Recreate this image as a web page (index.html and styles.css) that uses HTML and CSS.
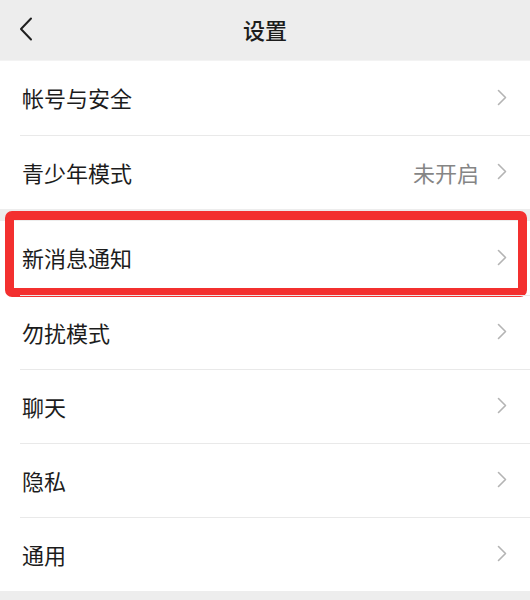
FILE: index.html
```html
<!DOCTYPE html>
<html lang="zh-CN">
<head>
  <meta charset="UTF-8">
  <title>设置</title>
  <link rel="stylesheet" href="styles.css">
</head>
<body>
  <div class="topbar">
    <div class="back">
      <svg width="14" height="24" viewBox="0 0 14 24"><path d="M12 1.5L2 12l10 10.5" fill="none" stroke="#1f1f1f" stroke-width="2" stroke-linecap="round" stroke-linejoin="round"/></svg>
    </div>
    <div class="title">设置</div>
    <div></div>
  </div>

  <div class="group">
    <div class="row">
      <div class="row-body">
        <span class="label">帐号与安全</span>
        <span class="arrow"><svg width="10" height="17" viewBox="0 0 10 17"><path d="M1.5 1.5l7 7-7 7" fill="none" stroke="#b4b4b4" stroke-width="1.6" stroke-linecap="round" stroke-linejoin="round"/></svg></span>
      </div>
    </div>
    <div class="row">
      <div class="row-body">
        <span class="label">青少年模式</span>
        <span class="value">未开启</span>
        <span class="arrow"><svg width="10" height="17" viewBox="0 0 10 17"><path d="M1.5 1.5l7 7-7 7" fill="none" stroke="#b4b4b4" stroke-width="1.6" stroke-linecap="round" stroke-linejoin="round"/></svg></span>
      </div>
    </div>
  </div>

  <div class="group">
    <div class="row highlighted">
      <div class="row-body">
        <span class="label">新消息通知</span>
        <span class="arrow"><svg width="10" height="17" viewBox="0 0 10 17"><path d="M1.5 1.5l7 7-7 7" fill="none" stroke="#b4b4b4" stroke-width="1.6" stroke-linecap="round" stroke-linejoin="round"/></svg></span>
      </div>
    </div>
    <div class="row">
      <div class="row-body">
        <span class="label">勿扰模式</span>
        <span class="arrow"><svg width="10" height="17" viewBox="0 0 10 17"><path d="M1.5 1.5l7 7-7 7" fill="none" stroke="#b4b4b4" stroke-width="1.6" stroke-linecap="round" stroke-linejoin="round"/></svg></span>
      </div>
    </div>
    <div class="row">
      <div class="row-body">
        <span class="label">聊天</span>
        <span class="arrow"><svg width="10" height="17" viewBox="0 0 10 17"><path d="M1.5 1.5l7 7-7 7" fill="none" stroke="#b4b4b4" stroke-width="1.6" stroke-linecap="round" stroke-linejoin="round"/></svg></span>
      </div>
    </div>
    <div class="row">
      <div class="row-body">
        <span class="label">隐私</span>
        <span class="arrow"><svg width="10" height="17" viewBox="0 0 10 17"><path d="M1.5 1.5l7 7-7 7" fill="none" stroke="#b4b4b4" stroke-width="1.6" stroke-linecap="round" stroke-linejoin="round"/></svg></span>
      </div>
    </div>
    <div class="row">
      <div class="row-body">
        <span class="label">通用</span>
        <span class="arrow"><svg width="10" height="17" viewBox="0 0 10 17"><path d="M1.5 1.5l7 7-7 7" fill="none" stroke="#b4b4b4" stroke-width="1.6" stroke-linecap="round" stroke-linejoin="round"/></svg></span>
      </div>
    </div>
  </div>
</body>
</html>
```

FILE: styles.css
```css
body { margin: 0; background: #ededed; font-family: "Noto Sans CJK SC", "Noto Sans", sans-serif; color: #1c1c1c; }
.topbar { height: 61px; box-sizing: border-box; padding-bottom: 3px; display: grid; grid-template-columns: 1fr auto 1fr; align-items: center; border-bottom: 1px solid #f3f3f3; }
.back { padding-left: 19px; display: flex; align-items: center; }
.title { font-size: 22px; font-weight: 500; }
.group { background: #fff; margin-bottom: 12px; }
.row { padding-left: 20px; position: relative; }
.row-body { height: 74px; box-sizing: border-box; display: flex; align-items: center; padding: 0 23px 2px 2px; font-size: 22px; }
.row + .row .row-body { border-top: 1px solid #e9e9e9; }
.label { flex: 1; }
.value { color: #858585; margin-right: 18px; }
.arrow { display: flex; align-items: center; }
.highlighted::after { content: ""; position: absolute; top: -10px; bottom: -2px; left: 5px; right: 3px; border: 9px solid #f3302f; border-radius: 7px; }
```
